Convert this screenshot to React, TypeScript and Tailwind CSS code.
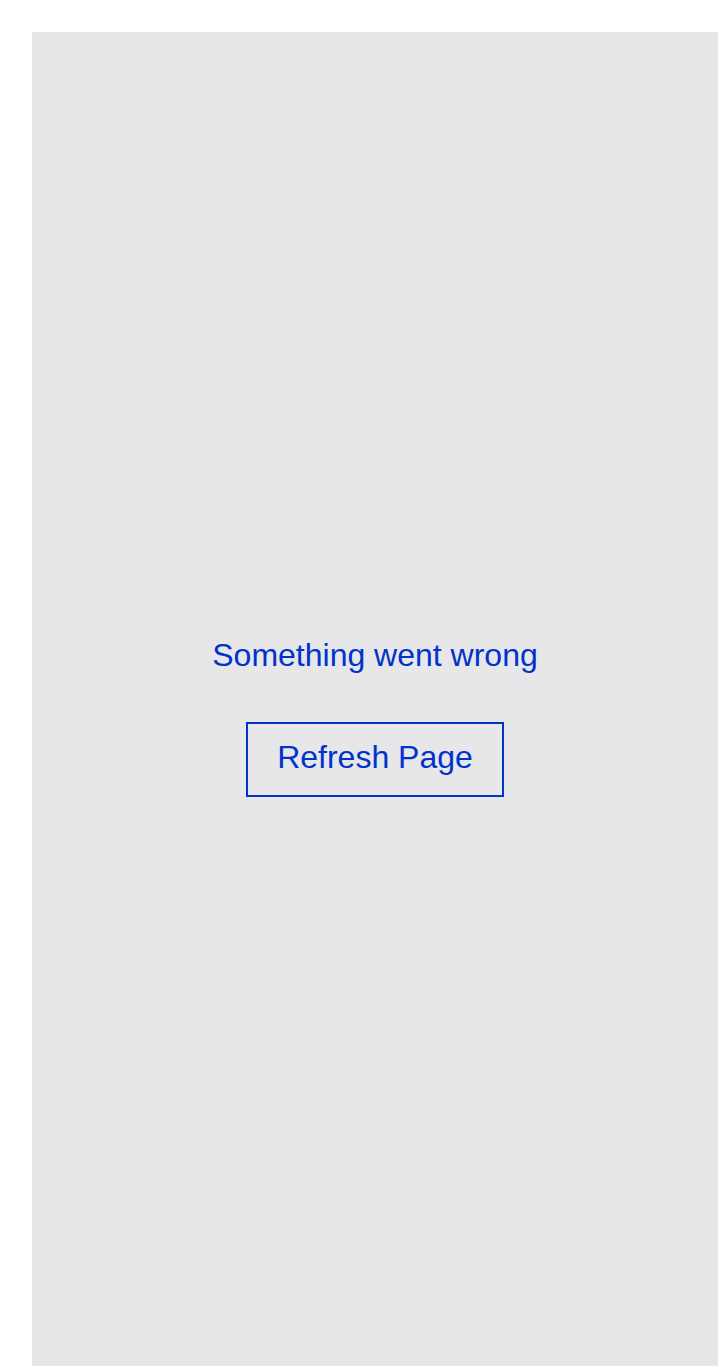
import React from 'react';

const App: React.FC = () => {
  return (
    <div className="bg-white pl-8 pt-8 font-['Liberation_Sans',Arial,sans-serif]">
      <div className="h-screen bg-[#e7e7ea] pt-[4px] flex flex-col items-center justify-center text-[#0033cc]">
        <p className="text-[32px] leading-[37px]">Something went wrong</p>
        <button
          type="button"
          onClick={() => window.location.reload()}
          className="mt-[48px] border-2 border-[#0033cc] px-[29px] pt-[15px] pb-[19px] text-[32px] leading-[37px] text-[#0033cc] bg-transparent"
        >
          Refresh Page
        </button>
      </div>
    </div>
  );
};

export default App;
